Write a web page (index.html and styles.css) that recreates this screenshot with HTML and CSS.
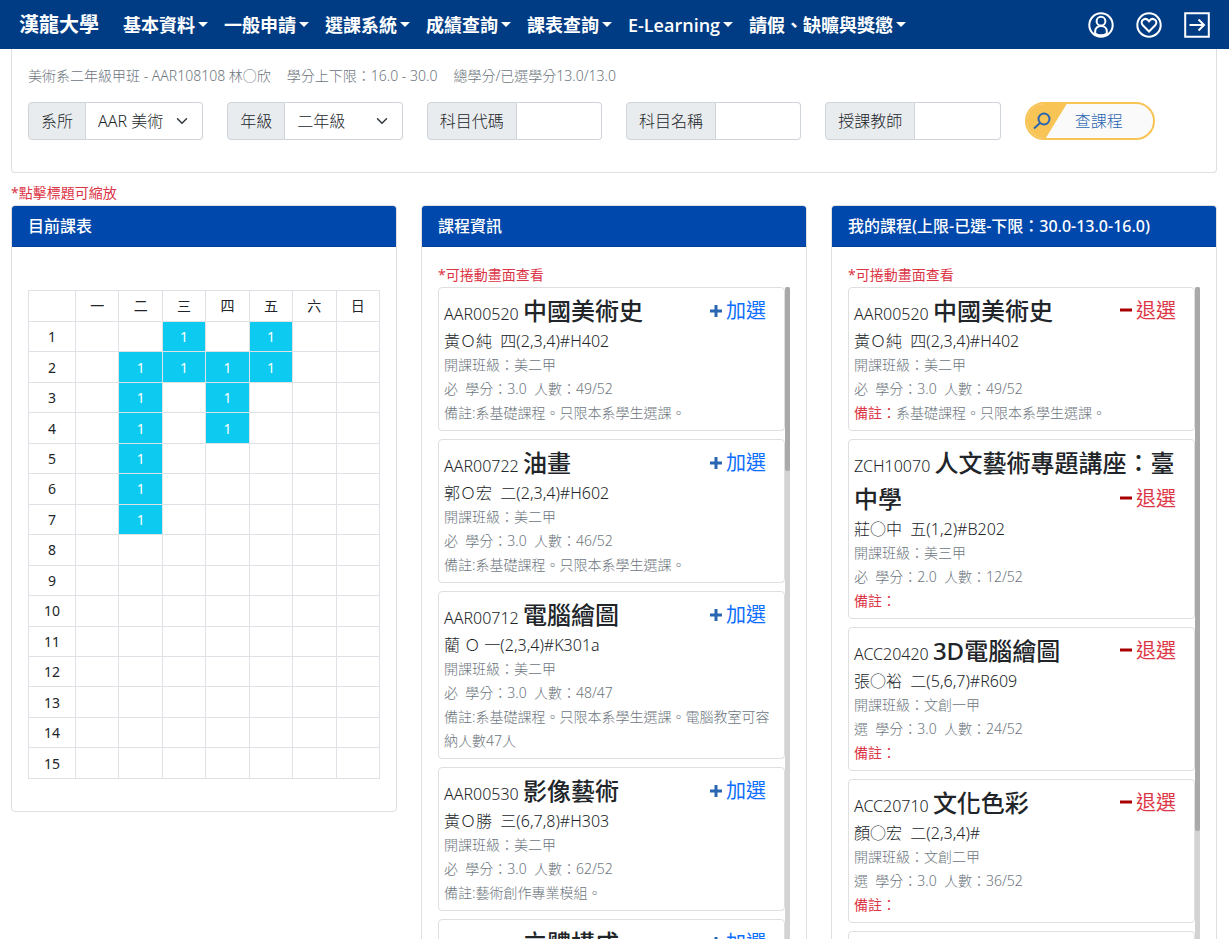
FILE: index.html
```html
<!DOCTYPE html>
<html lang="zh-Hant">
<head>
<meta charset="utf-8">
<meta name="viewport" content="width=device-width, initial-scale=1">
<title>漢龍大學</title>
<link rel="stylesheet" href="styles.css">
</head>
<body>
<header class="navbar">
  <a class="brand" href="#">漢龍大學</a>
  <nav class="menu">
    <a class="menu-link" href="#">基本資料</a>
    <a class="menu-link" href="#">一般申請</a>
    <a class="menu-link" href="#">選課系統</a>
    <a class="menu-link" href="#">成績查詢</a>
    <a class="menu-link" href="#">課表查詢</a>
    <a class="menu-link" href="#">E-Learning</a>
    <a class="menu-link" href="#">請假、缺曠與獎懲</a>
  </nav>
  <div class="tools">
    <a class="tool" href="#" aria-label="個人"><svg viewBox="0 0 26 26"><circle cx="13" cy="13" r="11.7"/><circle cx="13" cy="9.2" r="4.4"/><path d="M7.2 21.500v-2.200c0-3.200 2.400-5.300 5.800-5.300s5.800 2.100 5.800 5.300v2.200c-3 2.300-8.600 2.300-11.600 0z"/></svg></a>
    <a class="tool" href="#" aria-label="收藏"><svg viewBox="0 0 26 26"><circle cx="13" cy="13" r="11.700"/><path d="M13 19.500L6.800 13.300C5 11.300 5.400 8.700 7.300 7.600c2-1.200 4.300-.5 5.700 1.600 1.400-2.100 3.700-2.800 5.700-1.600 1.900 1.100 2.300 3.700.5 5.700z"/></svg></a>
    <a class="tool" href="#" aria-label="登出"><svg viewBox="0 0 26 26"><path d="M1.200 1.200h23.600v23.600H1.200zM5.500 13h14M14.500 7.500L20 13l-5.500 5.500"/></svg></a>
  </div>
</header>

<main class="page">
  <section class="search-card">
    <p class="summary"><span>美術系二年級甲班 - AAR108108 林○欣</span><span>學分上下限：16.0 - 30.0</span><span>總學分/已選學分13.0/13.0</span></p>
    <form class="filters">
      <div class="group"><label class="addon" for="dept">系所</label><select class="field select" id="dept"><option>AAR 美術</option></select></div>
      <div class="group"><label class="addon" for="grade">年級</label><select class="field select" id="grade"><option>二年級</option></select></div>
      <div class="group"><label class="addon" for="code">科目代碼</label><input class="field" id="code" type="text"></div>
      <div class="group"><label class="addon" for="name">科目名稱</label><input class="field" id="name" type="text"></div>
      <div class="group"><label class="addon" for="teacher">授課教師</label><input class="field" id="teacher" type="text"></div>
      <button class="search-btn" type="button"><span class="search-icon"><svg viewBox="0 0 18 18"><circle cx="11" cy="7" r="5.500"/><path d="M7 11L1 16.500"/></svg></span><span class="search-text">查課程</span></button>
    </form>
  </section>

  <p class="hint hint-top">*點擊標題可縮放</p>

  <div class="panels">
    <section class="panel">
      <h2 class="panel-head">目前課表</h2>
      <div class="panel-body">
        <table class="timetable">
          <thead><tr><th class="period"></th><th>一</th><th>二</th><th>三</th><th>四</th><th>五</th><th>六</th><th>日</th></tr></thead>
          <tbody>
            <tr><td>1</td><td></td><td></td><td class="on">1</td><td></td><td class="on">1</td><td></td><td></td></tr>
            <tr><td>2</td><td></td><td class="on">1</td><td class="on">1</td><td class="on">1</td><td class="on">1</td><td></td><td></td></tr>
            <tr><td>3</td><td></td><td class="on">1</td><td></td><td class="on">1</td><td></td><td></td><td></td></tr>
            <tr><td>4</td><td></td><td class="on">1</td><td></td><td class="on">1</td><td></td><td></td><td></td></tr>
            <tr><td>5</td><td></td><td class="on">1</td><td></td><td></td><td></td><td></td><td></td></tr>
            <tr><td>6</td><td></td><td class="on">1</td><td></td><td></td><td></td><td></td><td></td></tr>
            <tr><td>7</td><td></td><td class="on">1</td><td></td><td></td><td></td><td></td><td></td></tr>
            <tr><td>8</td><td></td><td></td><td></td><td></td><td></td><td></td><td></td></tr>
            <tr><td>9</td><td></td><td></td><td></td><td></td><td></td><td></td><td></td></tr>
            <tr><td>10</td><td></td><td></td><td></td><td></td><td></td><td></td><td></td></tr>
            <tr><td>11</td><td></td><td></td><td></td><td></td><td></td><td></td><td></td></tr>
            <tr><td>12</td><td></td><td></td><td></td><td></td><td></td><td></td><td></td></tr>
            <tr><td>13</td><td></td><td></td><td></td><td></td><td></td><td></td><td></td></tr>
            <tr><td>14</td><td></td><td></td><td></td><td></td><td></td><td></td><td></td></tr>
            <tr><td>15</td><td></td><td></td><td></td><td></td><td></td><td></td><td></td></tr>
          </tbody>
        </table>
      </div>
    </section>

    <section class="panel">
      <h2 class="panel-head">課程資訊</h2>
      <div class="panel-body">
        <p class="hint">*可捲動畫面查看</p>
        <div class="scroller">
          <div class="list">
            <article class="course">
              <div class="title">AAR00520 <b>中國美術史</b><button class="act add" type="button"><svg viewBox="0 0 12 12"><path d="M6 0v12M0 6h12"/></svg>加選</button></div>
              <p class="time">黃Ｏ純&nbsp; 四(2,3,4)#H402</p>
              <p>開課班級：美二甲</p>
              <p>必&nbsp; 學分：3.0&nbsp; 人數：49/52</p>
              <p>備註:系基礎課程。只限本系學生選課。</p>
            </article>
            <article class="course">
              <div class="title">AAR00722 <b>油畫</b><button class="act add" type="button"><svg viewBox="0 0 12 12"><path d="M6 0v12M0 6h12"/></svg>加選</button></div>
              <p class="time">郭Ｏ宏&nbsp; 二(2,3,4)#H602</p>
              <p>開課班級：美二甲</p>
              <p>必&nbsp; 學分：3.0&nbsp; 人數：46/52</p>
              <p>備註:系基礎課程。只限本系學生選課。</p>
            </article>
            <article class="course">
              <div class="title">AAR00712 <b>電腦繪圖</b><button class="act add" type="button"><svg viewBox="0 0 12 12"><path d="M6 0v12M0 6h12"/></svg>加選</button></div>
              <p class="time">藺 Ｏ 一(2,3,4)#K301a</p>
              <p>開課班級：美二甲</p>
              <p>必&nbsp; 學分：3.0&nbsp; 人數：48/47</p>
              <p>備註:系基礎課程。只限本系學生選課。電腦教室可容納人數47人</p>
            </article>
            <article class="course">
              <div class="title">AAR00530 <b>影像藝術</b><button class="act add" type="button"><svg viewBox="0 0 12 12"><path d="M6 0v12M0 6h12"/></svg>加選</button></div>
              <p class="time">黃Ｏ勝&nbsp; 三(6,7,8)#H303</p>
              <p>開課班級：美二甲</p>
              <p>必&nbsp; 學分：3.0&nbsp; 人數：62/52</p>
              <p>備註:藝術創作專業模組。</p>
            </article>
            <article class="course">
              <div class="title">AAR00540 <b>立體構成</b><button class="act add" type="button"><svg viewBox="0 0 12 12"><path d="M6 0v12M0 6h12"/></svg>加選</button></div>
              <p>備註:</p>
            </article>
          </div>
          <div class="track"><div class="thumb" style="height:27%"></div></div>
        </div>
      </div>
    </section>

    <section class="panel">
      <h2 class="panel-head">我的課程(上限-已選-下限：30.0-13.0-16.0)</h2>
      <div class="panel-body">
        <p class="hint">*可捲動畫面查看</p>
        <div class="scroller">
          <div class="list">
            <article class="course">
              <div class="title">AAR00520 <b>中國美術史</b><button class="act drop" type="button"><svg viewBox="0 0 12 12"><path d="M0 5h12"/></svg>退選</button></div>
              <p class="time">黃Ｏ純&nbsp; 四(2,3,4)#H402</p>
              <p>開課班級：美二甲</p>
              <p>必&nbsp; 學分：3.0&nbsp; 人數：49/52</p>
              <p><span class="note">備註：</span>系基礎課程。只限本系學生選課。</p>
            </article>
            <article class="course">
              <div class="title">ZCH10070 <b>人文藝術專題講座：臺中學</b><button class="act drop" type="button"><svg viewBox="0 0 12 12"><path d="M0 5h12"/></svg>退選</button></div>
              <p class="time">莊○中&nbsp; 五(1,2)#B202</p>
              <p>開課班級：美三甲</p>
              <p>必&nbsp; 學分：2.0&nbsp; 人數：12/52</p>
              <p><span class="note">備註：</span></p>
            </article>
            <article class="course">
              <div class="title">ACC20420 <b>3D電腦繪圖</b><button class="act drop" type="button"><svg viewBox="0 0 12 12"><path d="M0 5h12"/></svg>退選</button></div>
              <p class="time">張○裕&nbsp; 二(5,6,7)#R609</p>
              <p>開課班級：文創一甲</p>
              <p>選&nbsp; 學分：3.0&nbsp; 人數：24/52</p>
              <p><span class="note">備註：</span></p>
            </article>
            <article class="course">
              <div class="title">ACC20710 <b>文化色彩</b><button class="act drop" type="button"><svg viewBox="0 0 12 12"><path d="M0 5h12"/></svg>退選</button></div>
              <p class="time">顏○宏&nbsp; 二(2,3,4)#</p>
              <p>開課班級：文創二甲</p>
              <p>選&nbsp; 學分：3.0&nbsp; 人數：36/52</p>
              <p><span class="note">備註：</span></p>
            </article>
            <article class="course"></article>
          </div>
          <div class="track"><div class="thumb" style="height:80%"></div></div>
        </div>
      </div>
    </section>
  </div>
</main>
</body>
</html>
```
FILE: styles.css
```css
* { box-sizing: border-box; }

html { scrollbar-width: none; }

body {
  margin: 0;
  background: #fff;
  color: #212529;
  font: 300 16px/24px "Noto Sans", "Noto Sans CJK TC", sans-serif;
}

p, h2 { margin: 0; }

button, input, select { font: inherit; color: inherit; }

.navbar {
  position: sticky;
  top: 0;
  z-index: 2;
  display: flex;
  align-items: center;
  height: 49px;
  padding: 0 19px;
  background: #003c84;
}

.navbar a { color: #fff; text-decoration: none; }

.brand { margin-right: 16px; font-size: 20px; font-weight: 700; white-space: nowrap; }

.menu { display: flex; flex: 1; }

.menu-link {
  display: flex;
  align-items: center;
  gap: 3px;
  padding: 0 8px;
  font: 600 18px/24px "Open Sans", "Noto Sans CJK TC", sans-serif;
  white-space: nowrap;
}

.menu-link::after {
  content: "";
  border: 5px solid transparent;
  border-top-color: #fff;
  border-bottom: 0;
}

.tools { display: flex; gap: 22px; }

.tool { display: block; width: 26px; height: 26px; }

.tool svg { display: block; fill: none; stroke: #fff; stroke-width: 2; }

.page { padding: 0 12px 0 11px; }

.search-card {
  padding: 15px 16px 32px;
  border: 1px solid #dfdfdf;
  border-top: 0;
  border-radius: 0 0 4px 4px;
}

.summary { display: flex; gap: 16px; margin-bottom: 14px; color: #6c757d; font-size: 14px; }

.filters { display: grid; grid-template-columns: repeat(6, minmax(0, 1fr)); gap: 24px; }

.group { display: flex; height: 38px; }

.addon {
  flex: none;
  padding: 6px 12px;
  border: 1px solid #ced4da;
  border-radius: 4px 0 0 4px;
  background: #e9ecef;
}

.field {
  flex: 1;
  min-width: 0;
  padding: 6px 12px;
  border: 1px solid #ced4da;
  border-left: 0;
  border-radius: 0 4px 4px 0;
  background: #fff;
}

.select {
  appearance: none;
  padding-right: 32px;
  background: #fff url("data:image/svg+xml,%3Csvg xmlns='http://www.w3.org/2000/svg' viewBox='0 0 16 16'%3E%3Cpath fill='none' stroke='%23343a40' stroke-linecap='round' stroke-linejoin='round' stroke-width='2' d='M2 5l6 6 6-6'/%3E%3C/svg%3E") no-repeat right 12px center / 16px 12px;
}

.search-btn {
  display: flex;
  align-items: center;
  width: 130px;
  height: 38px;
  padding: 0;
  overflow: hidden;
  border: 2px solid #f7c455;
  border-radius: 19px;
  background: #fafafa;
  color: #2a65b2;
}

.search-icon {
  display: flex;
  align-items: center;
  width: 40px;
  height: 100%;
  padding-left: 6px;
  background: #f7c455;
  clip-path: polygon(0 0, 100% 0, 48% 100%, 0 100%);
}

.search-icon svg { width: 18px; height: 18px; fill: none; stroke: #2a65b2; stroke-width: 2; }

.search-text { margin-left: 8px; }

.hint { color: #dc3545; font-size: 14px; font-weight: 400; }

.hint-top { margin-top: 8px; }

.panels { display: grid; grid-template-columns: repeat(3, minmax(0, 1fr)); align-items: start; gap: 24px; }

.panel { border: 1px solid #dfdfdf; border-radius: 4px; }

.panel-head {
  padding: 8px 16px;
  border-bottom: 1px solid #00409a;
  border-radius: 3px 3px 0 0;
  background: #0048ac;
  color: #fff;
  font-size: 16px;
  font-weight: 500;
}

.panel-body { padding: 16px; }

.timetable {
  width: 100%;
  height: 489px;
  margin: 27px 0 16px;
  border-collapse: collapse;
  table-layout: fixed;
  font-size: 14px;
  line-height: 20px;
  text-align: center;
}

.timetable th, .timetable td { padding: 5px 4px 4px; border: 1px solid #dee2e6; font-weight: 400; }

.timetable th { padding-bottom: 5px; }

.timetable .period { width: 47px; }

.timetable .on { background: #0dcaf0; color: #fff; }

.scroller { display: flex; height: 680px; }

.list { flex: 1; min-width: 0; overflow-y: auto; scrollbar-width: none; }

.track { width: 5px; background: #d3d3d3; }

.thumb { border-radius: 3px; background: #a9a9a9; }

.course {
  min-height: 144px;
  margin-bottom: 8px;
  padding: 5px;
  border: 1px solid #dfdfdf;
  border-radius: 4px;
  color: #6c757d;
  font-size: 14px;
}

.title { color: #212529; font-size: 16px; line-height: 24px; }

.title::after { content: ""; display: block; clear: both; }

.title b { font-size: 24px; font-weight: 500; line-height: 36px; }

.time { color: #212529; font-size: 16px; }

.act {
  float: right;
  display: flex;
  align-items: center;
  gap: 4px;
  height: 36px;
  margin-right: 13px;
  padding: 0;
  border: 0;
  background: none;
  font-size: 20px;
  font-weight: 400;
}

.act svg { width: 12px; height: 12px; fill: none; stroke-width: 3; }

.add { color: #0d6efd; }

.add svg { stroke: #2a65b2; }

.drop { color: #dc3545; }

.drop svg { stroke: #a80000; }

.note { color: #dc3545; font-weight: 400; }
```
